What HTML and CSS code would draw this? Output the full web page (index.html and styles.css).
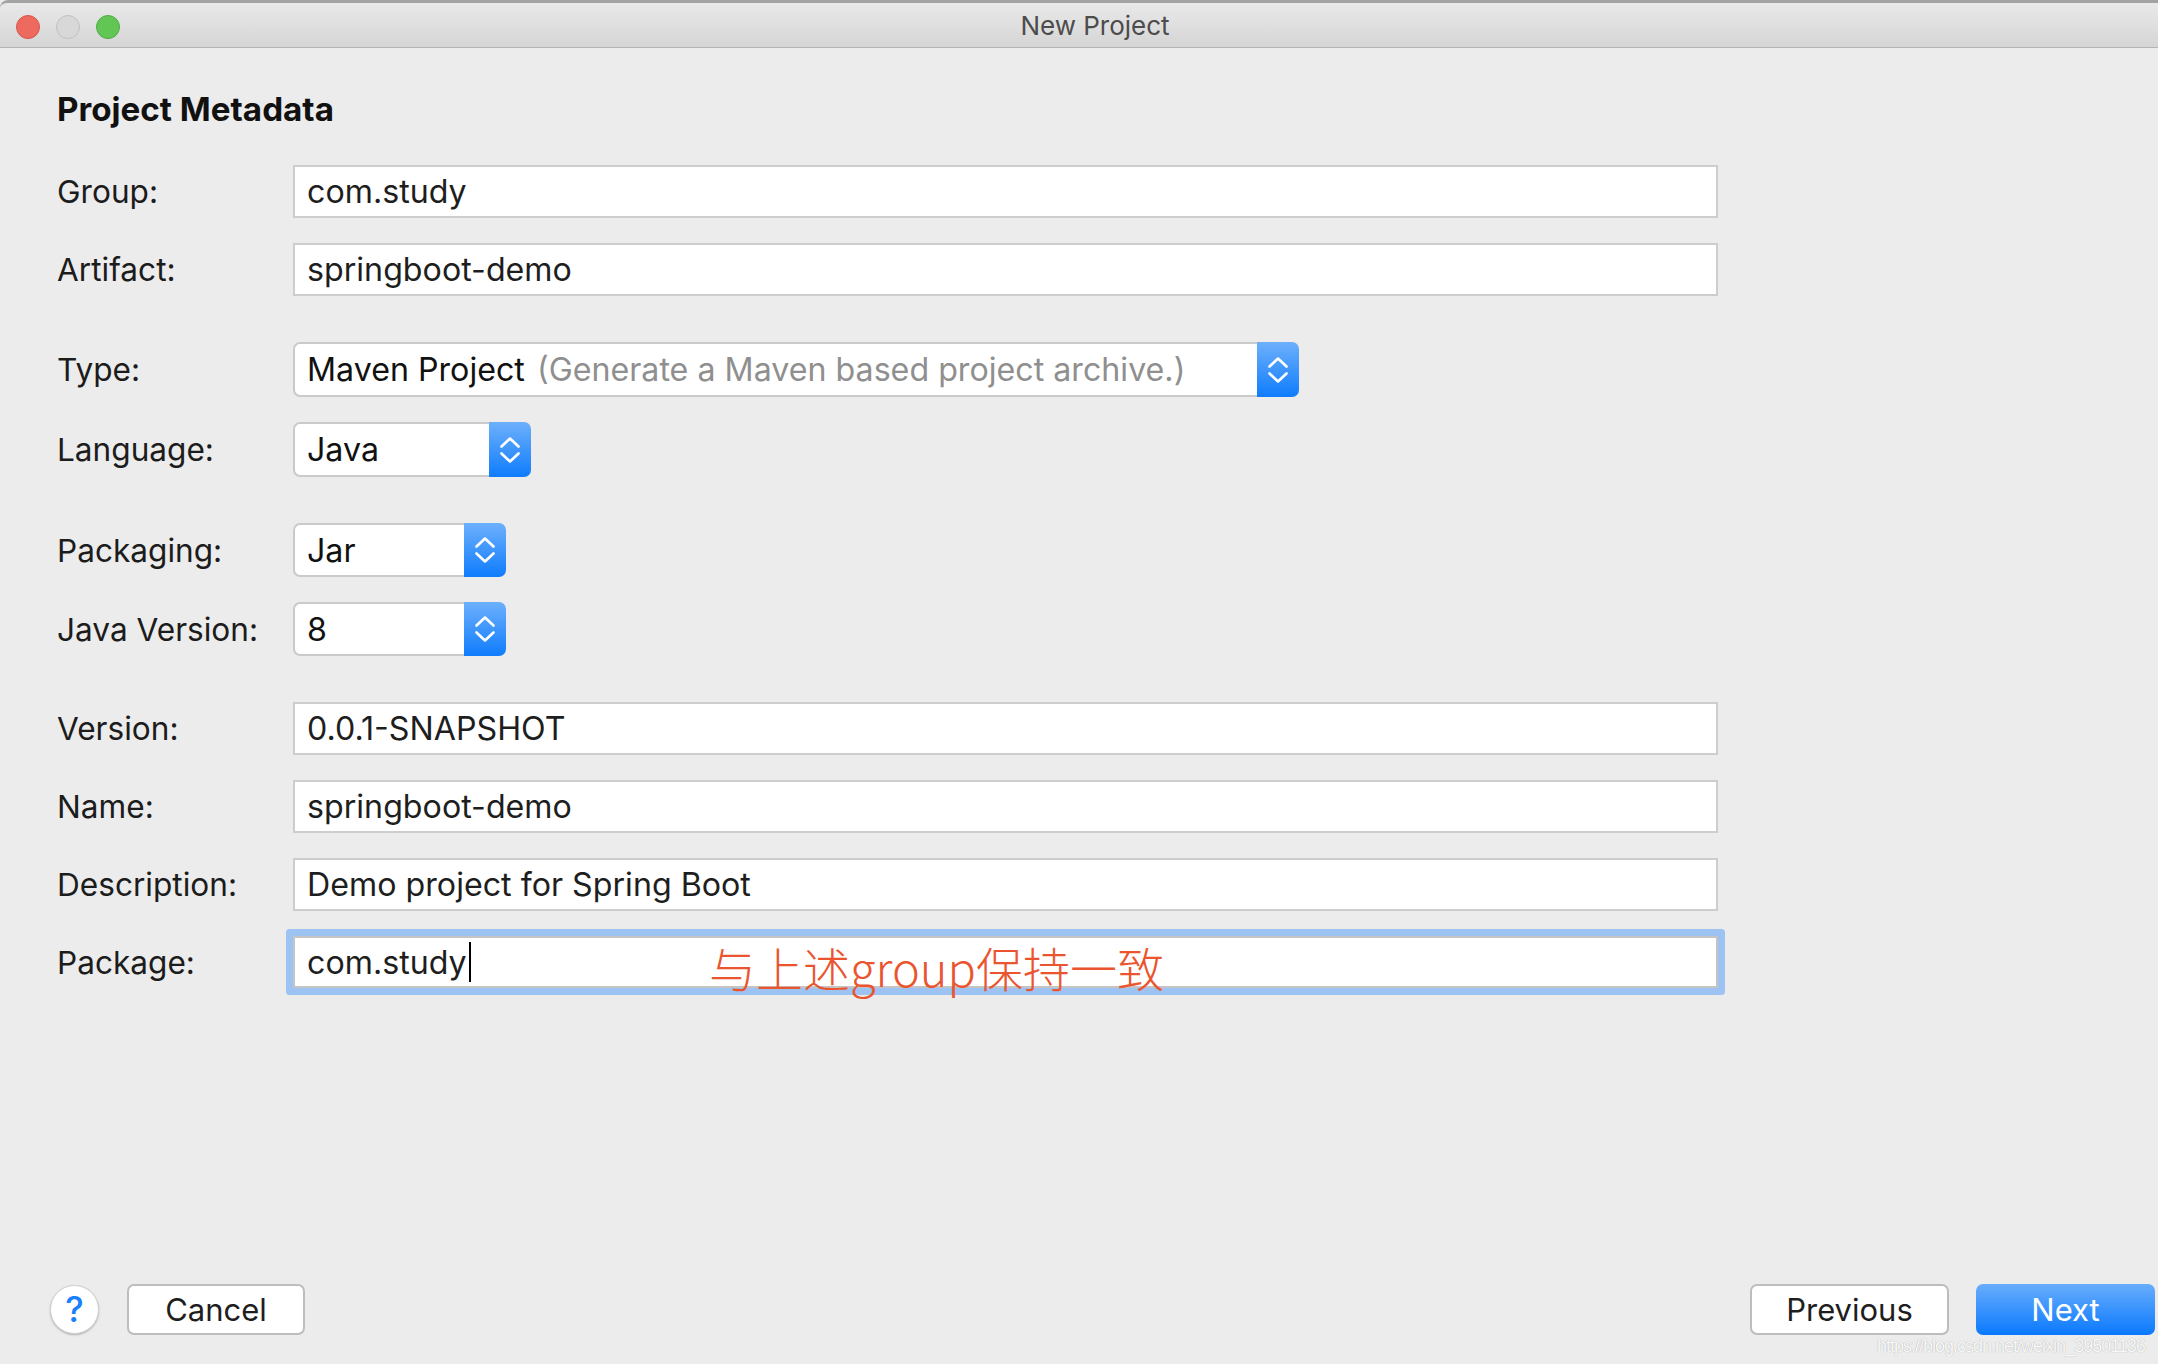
FILE: index.html
```html
<!DOCTYPE html>
<html lang="en">
<head>
<meta charset="utf-8">
<title>New Project</title>
<link rel="stylesheet" href="styles.css">
</head>
<body>
<div class="window">
  <div class="titlebar">
    <div class="lights">
      <span class="light red"></span>
      <span class="light gray"></span>
      <span class="light green"></span>
    </div>
    <div class="title">New Project</div>
  </div>

  <div class="content">
    <h1 class="heading">Project Metadata</h1>
    <div class="form">
      <div class="row">
        <div class="label">Group:</div>
        <div class="field">com.study</div>
      </div>
      <div class="row">
        <div class="label">Artifact:</div>
        <div class="field">springboot-demo</div>
      </div>

      <div class="row row-select group-start">
        <div class="label">Type:</div>
        <div class="select select-type">
          <div class="select-value">Maven Project<span class="hint">(Generate a Maven based project archive.)</span></div>
          <div class="select-arrow"><svg width="20" height="26" viewBox="0 0 20 26"><path d="M1.5 9.5 L10 1.5 L18.5 9.5 M1.5 16.5 L10 24.5 L18.5 16.5" fill="none" stroke="#fff" stroke-width="2.6" stroke-linecap="round" stroke-linejoin="round"/></svg></div>
        </div>
      </div>
      <div class="row row-select">
        <div class="label">Language:</div>
        <div class="select select-lang">
          <div class="select-value">Java</div>
          <div class="select-arrow"><svg width="20" height="26" viewBox="0 0 20 26"><path d="M1.5 9.5 L10 1.5 L18.5 9.5 M1.5 16.5 L10 24.5 L18.5 16.5" fill="none" stroke="#fff" stroke-width="2.6" stroke-linecap="round" stroke-linejoin="round"/></svg></div>
        </div>
      </div>

      <div class="row row-select-sm group-start">
        <div class="label">Packaging:</div>
        <div class="select select-sm">
          <div class="select-value">Jar</div>
          <div class="select-arrow"><svg width="20" height="26" viewBox="0 0 20 26"><path d="M1.5 9.5 L10 1.5 L18.5 9.5 M1.5 16.5 L10 24.5 L18.5 16.5" fill="none" stroke="#fff" stroke-width="2.6" stroke-linecap="round" stroke-linejoin="round"/></svg></div>
        </div>
      </div>
      <div class="row row-select-sm">
        <div class="label">Java Version:</div>
        <div class="select select-sm">
          <div class="select-value">8</div>
          <div class="select-arrow"><svg width="20" height="26" viewBox="0 0 20 26"><path d="M1.5 9.5 L10 1.5 L18.5 9.5 M1.5 16.5 L10 24.5 L18.5 16.5" fill="none" stroke="#fff" stroke-width="2.6" stroke-linecap="round" stroke-linejoin="round"/></svg></div>
        </div>
      </div>

      <div class="row group-start">
        <div class="label">Version:</div>
        <div class="field">0.0.1-SNAPSHOT</div>
      </div>
      <div class="row">
        <div class="label">Name:</div>
        <div class="field">springboot-demo</div>
      </div>
      <div class="row">
        <div class="label">Description:</div>
        <div class="field">Demo project for Spring Boot</div>
      </div>
      <div class="row row-focus">
        <div class="label">Package:</div>
        <div class="field field-focus">com.study<span class="caret"></span>
          <span class="note">与上述group保持一致</span>
        </div>
      </div>
    </div>
  </div>

  <div class="footer">
    <div class="footer-left">
      <div class="help">?</div>
      <div class="btn">Cancel</div>
    </div>
    <div class="footer-right">
      <div class="btn btn-prev">Previous</div>
      <div class="btn btn-primary">Next</div>
    </div>
  </div>

  <div class="watermark">https://blog.csdn.net/weixin_39501136</div>
</div>
</body>
</html>
```

FILE: styles.css
```css
* {
  box-sizing: border-box;
}

html, body {
  margin: 0;
  padding: 0;
  background: #ececec;
}

body {
  font-family: Inter, "Noto Sans CJK SC", sans-serif;
  color: #1e1e1e;
}

.window {
  position: relative;
  width: 2158px;
  height: 1364px;
  overflow: hidden;
  display: flex;
  flex-direction: column;
  background: #ececec;
}

/* ---------- title bar ---------- */
.titlebar {
  display: grid;
  height: 48px;
  border-top: 3px solid #a3a3a3;
  border-bottom: 1px solid #b4b4b4;
  background: linear-gradient(#e9e9e9, #d5d5d5);
  border-top-left-radius: 8px;
}

.lights,
.title {
  grid-area: 1 / 1;
}

.lights {
  display: flex;
  align-items: center;
  gap: 16px;
  padding-left: 16px;
  padding-top: 2px;
}

.light {
  width: 24px;
  height: 24px;
  border-radius: 50%;
  display: block;
}

.light.red {
  background: #ee6a5f;
  border: 1px solid #d5564c;
}

.light.gray {
  background: #d8d8d8;
  border: 1px solid #c1c1c1;
}

.light.green {
  background: #62c655;
  border: 1px solid #50ab44;
}

.title {
  text-align: center;
  padding-left: 32px;
  font-size: 26px;
  line-height: 46px;
  color: #4c4c4c;
}

/* ---------- content ---------- */
.content {
  flex: 1;
  padding: 41px 0 0 57px;
}

.heading {
  margin: 0;
  font-size: 33.2px;
  line-height: 40px;
  font-weight: 700;
  color: #111;
}

.form {
  margin-top: 36px;
  display: flex;
  flex-direction: column;
  gap: 25px;
}

.row {
  display: flex;
  align-items: center;
  height: 53px;
}

.row.row-select {
  height: 55px;
}

.row.row-select-sm {
  height: 54px;
}

.row.row-focus {
  height: 52px;
}

.row.group-start {
  margin-top: 21px;
}

.label {
  width: 236px;
  flex: none;
  font-size: 31.6px;
  color: #1c1c1c;
}

.field {
  position: relative;
  width: 1425px;
  height: 100%;
  display: flex;
  align-items: center;
  padding-left: 12px;
  background: #fff;
  border: 2px solid #cdcdcd;
  font-size: 32.2px;
  color: #1e1e1e;
}

.field-focus {
  border-color: #c4c4c4;
  box-shadow: 0 0 0 7px #9cc3f1;
  border-radius: 1px;
}

.caret {
  display: inline-block;
  width: 2px;
  height: 40px;
  margin-left: 2px;
  background: #000;
}

.note {
  position: absolute;
  left: 414px;
  top: 5px;
  font-family: "Noto Sans CJK SC", sans-serif;
  font-size: 47px;
  font-weight: 300;
  line-height: 1;
  color: #ea552f;
  white-space: nowrap;
}

/* ---------- selects ---------- */
.select {
  display: flex;
  height: 100%;
}

.select-type {
  width: 1006px;
}

.select-lang {
  width: 238px;
}

.select-sm {
  width: 213px;
}

.select-value {
  flex: 1;
  display: flex;
  align-items: center;
  padding-left: 12px;
  background: #fff;
  border: 2px solid #cacaca;
  border-right: 0;
  border-radius: 7px 0 0 7px;
  font-size: 32.2px;
  color: #111;
  white-space: nowrap;
  overflow: hidden;
}

.hint {
  margin-left: 12px;
  color: #8f8f8f;
}

.select-arrow {
  width: 42px;
  flex: none;
  display: flex;
  align-items: center;
  justify-content: center;
  background: linear-gradient(#6db0fc, #0f7cfd);
  border-radius: 0 7px 7px 0;
}

/* ---------- footer ---------- */
.footer {
  display: flex;
  justify-content: space-between;
  align-items: center;
  padding: 0 3px 29px 50px;
}

.footer-left,
.footer-right {
  display: flex;
  align-items: center;
}

.footer-left {
  gap: 28px;
}

.footer-right {
  gap: 27px;
}

.help {
  width: 49px;
  height: 49px;
  border-radius: 50%;
  background: #fff;
  border: 1px solid #d0d0d0;
  box-shadow: 0 1px 2px rgba(0, 0, 0, 0.25);
  display: flex;
  align-items: center;
  justify-content: center;
  font-size: 35px;
  font-weight: 500;
  color: #1a80fb;
  line-height: 1;
}

.btn {
  width: 178px;
  height: 51px;
  border-radius: 7px;
  background: #fff;
  border: 2px solid #bdbdbd;
  display: flex;
  align-items: center;
  justify-content: center;
  font-size: 31px;
  color: #1e1e1e;
}

.btn-prev {
  width: 199px;
}

.btn-primary {
  width: 179px;
  border: 0;
  color: #fff;
  background: linear-gradient(#68adfc, #0a79fe);
}

.watermark {
  position: absolute;
  left: 1877px;
  top: 1336px;
  font-family: "Liberation Sans", sans-serif;
  font-size: 18px;
  line-height: 20px;
  letter-spacing: -1px;
  color: rgba(255, 255, 255, 0.95);
  text-shadow: 0 0 1px rgba(0, 0, 0, 0.35);
  white-space: nowrap;
}
```
